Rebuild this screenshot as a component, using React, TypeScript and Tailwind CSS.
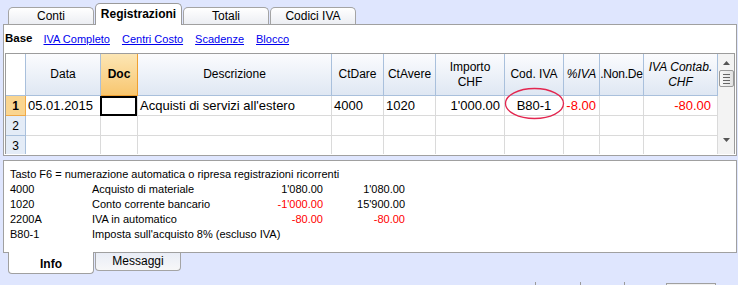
import React from 'react';

const cols = 'grid grid-cols-[20px_75px_37px_194px_52px_52px_69px_59px_36px_44px_74px]';

const TopTab = ({ label, active }: { label: string; active?: boolean }) =>
  active ? (
    <div className="relative z-10 -mb-px ml-px flex h-[22px] w-[87px] items-center justify-center rounded-t-[5px] border border-b-0 border-[#9a9a9a] bg-white pb-[2px] text-[12px] font-bold text-black">
      {label}
    </div>
  ) : (
    <div className="ml-px flex h-[17px] w-[86px] items-center justify-center rounded-t-[5px] border border-b-0 border-[#a4a4a4] bg-gradient-to-b from-white to-[#eceef3] text-[12px] text-black">
      {label}
    </div>
  );

const HeadCell = ({ children, className = '' }: { children?: React.ReactNode; className?: string }) => (
  <div
    className={`flex h-[42px] flex-col items-center justify-center border-r border-b border-[#a9c0dc] bg-gradient-to-b from-[#fbfcfe] to-[#dfe7f3] text-center text-[12px] leading-[15px] ${className}`}
  >
    {children}
  </div>
);

const Cell = ({ children, className = '' }: { children?: React.ReactNode; className?: string }) => (
  <div className={`flex h-[20px] items-center overflow-hidden whitespace-nowrap border-r border-b border-[#dadada] text-[13px] ${className}`}>
    {children}
  </div>
);

const RowNum = ({ n, active }: { n: number; active?: boolean }) => (
  <div
    className={`flex h-[20px] items-center justify-center border-r border-b text-[12px] ${
      active ? 'border-[#f0a948] bg-[#fad590] font-bold' : 'border-[#a9c0dc] bg-[#e4ecf7]'
    }`}
  >
    {n}
  </div>
);

const infoRows = [
  { code: '4000', desc: 'Acquisto di materiale', a: '1\'080.00', b: '1\'080.00', red: false },
  { code: '1020', desc: 'Conto corrente bancario', a: '-1\'000.00', b: '15\'900.00', red: true },
  { code: '2200A', desc: 'IVA in automatico', a: '-80.00', b: '-80.00', red: true, redB: true },
  { code: 'B80-1', desc: 'Imposta sull\'acquisto 8% (escluso IVA)', a: '', b: '', red: false },
];

export default function App() {
  return (
    <div className="relative flex h-[285px] w-[738px] flex-col overflow-hidden bg-[#dfe6fe] font-['Liberation_Sans',Arial,sans-serif] text-black">
      {/* top tabs */}
      <div className="flex h-[24px] items-end pl-[7px]">
        <TopTab label="Conti" />
        <TopTab label="Registrazioni" active />
        <TopTab label="Totali" />
        <TopTab label="Codici IVA" />
      </div>

      {/* main panel */}
      <div className="ml-[3px] h-[132px] w-[734px] border border-[#a0a0a0] bg-white">
        <div className="flex h-[28px] items-center gap-[12px] pl-px text-[11px]">
          <span className="-mr-px text-[11.5px] font-bold">Base</span>
          <span className="text-[#0000ee] underline">IVA Completo</span>
          <span className="text-[#0000ee] underline">Centri Costo</span>
          <span className="text-[#0000ee] underline">Scadenze</span>
          <span className="text-[#0000ee] underline">Blocco</span>
        </div>

        <div className="ml-px flex h-[101px] w-[730px] overflow-hidden border border-b-0 border-[#9c9c9c]">
          <div className={`${cols} content-start`}>
            <HeadCell className="!bg-none bg-gradient-to-br from-[#e9effa] to-[#cfdcf0]" />
            <HeadCell>Data</HeadCell>
            <HeadCell className="border-[#f0a030] from-[#fce6b4] to-[#f8c66e] font-bold">Doc</HeadCell>
            <HeadCell>Descrizione</HeadCell>
            <HeadCell>CtDare</HeadCell>
            <HeadCell>CtAvere</HeadCell>
            <HeadCell>
              <span>Importo</span>
              <span>CHF</span>
            </HeadCell>
            <HeadCell>Cod. IVA</HeadCell>
            <HeadCell className="italic">%IVA</HeadCell>
            <HeadCell className="whitespace-nowrap text-[11.5px] tracking-[-0.2px]">.Non.De</HeadCell>
            <HeadCell className="italic">
              <span>IVA Contab.</span>
              <span>CHF</span>
            </HeadCell>

            <RowNum n={1} active />
            <Cell className="pl-[2px]">05.01.2015</Cell>
            <div className="h-[20px] border-r border-b border-[#dadada] p-0">
              <div className="h-[20px] w-[37px] -translate-x-px border-2 border-black" />
            </div>
            <Cell className="pl-[2px]">Acquisti di servizi all'estero</Cell>
            <Cell className="pl-[2px]">4000</Cell>
            <Cell className="pl-[2px]">1020</Cell>
            <Cell className="justify-end pr-[4px]">1'000.00</Cell>
            <Cell className="justify-center">B80-1</Cell>
            <Cell className="justify-end pr-[3px] text-[#ff0000]">-8.00</Cell>
            <Cell />
            <Cell className="justify-end pr-[6px] text-[#ff0000]">-80.00</Cell>

            {[2, 3].map((n) => (
              <React.Fragment key={n}>
                <RowNum n={n} />
                {Array.from({ length: 10 }).map((_, i) => (
                  <Cell key={i} />
                ))}
              </React.Fragment>
            ))}
          </div>

          {/* scrollbar */}
          <div className="flex w-[17px] flex-col items-center bg-[#f3f3f3] text-[#555]">
            <svg width="7" height="4" viewBox="0 0 7 4" className="mt-[7px]">
              <path d="M0 4 L3.5 0 L7 4 Z" fill="#555" />
            </svg>
            <div className="mt-[5px] flex h-[17px] w-[15px] flex-col items-center justify-center gap-[2px] rounded-[2px] border border-[#9a9a9a] bg-gradient-to-r from-[#f8f8f8] to-[#e2e2e2]">
              <div className="h-px w-[7px] bg-[#666]" />
              <div className="h-px w-[7px] bg-[#666]" />
              <div className="h-px w-[7px] bg-[#666]" />
              <div className="h-px w-[7px] bg-[#666]" />
            </div>
            <svg width="7" height="4" viewBox="0 0 7 4" className="mt-[51px]">
              <path d="M0 0 L3.5 4 L7 0 Z" fill="#555" />
            </svg>
          </div>
        </div>
      </div>

      {/* info panel */}
      <div className="mt-[4px] ml-[3px] h-[93px] w-[734px] border border-[#a0a0a0] bg-white pt-[6px] pl-[6px] text-[11px] leading-[15px]">
        <div>Tasto F6 = numerazione automatica o ripresa registrazioni ricorrenti</div>
        {infoRows.map((r) => (
          <div key={r.code} className="grid grid-cols-[82px_151px_80px_82px] whitespace-nowrap">
            <span>{r.code}</span>
            <span>{r.desc}</span>
            <span className={`text-right ${r.red ? 'text-[#ff0000]' : ''}`}>{r.a}</span>
            <span className={`text-right ${r.redB ? 'text-[#ff0000]' : ''}`}>{r.b}</span>
          </div>
        ))}
      </div>

      {/* bottom tabs */}
      <div className="flex items-start pl-[8px]">
        <div className="relative z-10 -mt-px flex h-[22px] w-[86px] items-center justify-center rounded-b-[4px] border border-t-0 border-[#a0a0a0] bg-white pt-[2px] text-[12px] font-bold">
          Info
        </div>
        <div className="ml-px flex h-[18px] w-[86px] items-center justify-center rounded-b-[4px] border border-t-0 border-[#a4a4a4] bg-gradient-to-b from-[#e9edf6] to-[#f7f7f8] pb-[2px] text-[12px]">
          Messaggi
        </div>
      </div>

      {/* status bar edge */}
      <div className="mt-auto flex h-[3px] pl-[535px]">
        <div className="w-[45px] border-l border-[#9a9a9a]" />
        <div className="w-[44px] border-l border-[#9a9a9a]" />
        <div className="w-[42px] border-l border-[#9a9a9a]" />
        <div className="mt-px w-[50px] border-x border-t border-[#a0a0a0] bg-[#f0f0f0]" />
      </div>

      {/* annotation */}
      <svg className="absolute left-[504px] top-[87px]" width="61" height="33" viewBox="0 0 61 33">
        <ellipse cx="30.5" cy="16.5" rx="29" ry="15" fill="none" stroke="#e3264f" strokeWidth="1.3" />
      </svg>
    </div>
  );
}
